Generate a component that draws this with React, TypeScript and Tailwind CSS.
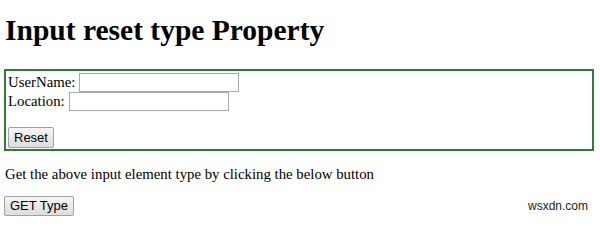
import React from 'react';

export default function App() {
  return (
    <div className="w-[600px] h-[226px] bg-white text-black pl-[4px] pr-[6px] overflow-hidden">
      <h1 className="font-['Liberation_Serif',serif] font-bold text-[29.5px] leading-none pt-[16px] pl-[1px]">
        Input reset type Property
      </h1>
      <form className="mt-[23px] h-[82px] border-2 border-[#2f7d32] px-[2px] pt-[2px] font-['Liberation_Serif',serif] text-[14.8px] leading-[19px]">
        <div className="flex items-center h-[19px]">
          UserName:
          <input type="text" className="ml-[4px] w-[160px] h-[19px] border border-[#a9a9a9] bg-white" />
        </div>
        <div className="flex items-center h-[19px]">
          Location:
          <input type="text" className="ml-[4px] w-[160px] h-[19px] border border-[#a9a9a9] bg-white" />
        </div>
        <div className="mt-[16px]">
          <button type="reset" className="h-[21px] px-[5px] border border-[#a0a0a0] rounded-[2px] bg-gradient-to-b from-[#f6f6f6] to-[#dddddd] font-['Liberation_Sans',sans-serif] text-[13px] leading-none">
            Reset
          </button>
        </div>
      </form>
      <p className="mt-[14px] pl-[1px] font-['Liberation_Serif',serif] text-[14.8px] leading-[19px]">
        Get the above input element type by clicking the below button
      </p>
      <div className="mt-[12px] flex justify-between items-center h-[20px]">
        <button className="h-[20px] px-[5px] border border-[#a0a0a0] rounded-[2px] bg-gradient-to-b from-[#f6f6f6] to-[#dddddd] font-['Liberation_Sans',sans-serif] text-[13px] leading-none">
          GET Type
        </button>
        <span className="mr-[6px] font-['Liberation_Sans',sans-serif] text-[12px] text-[#222]">wsxdn.com</span>
      </div>
    </div>
  );
}
